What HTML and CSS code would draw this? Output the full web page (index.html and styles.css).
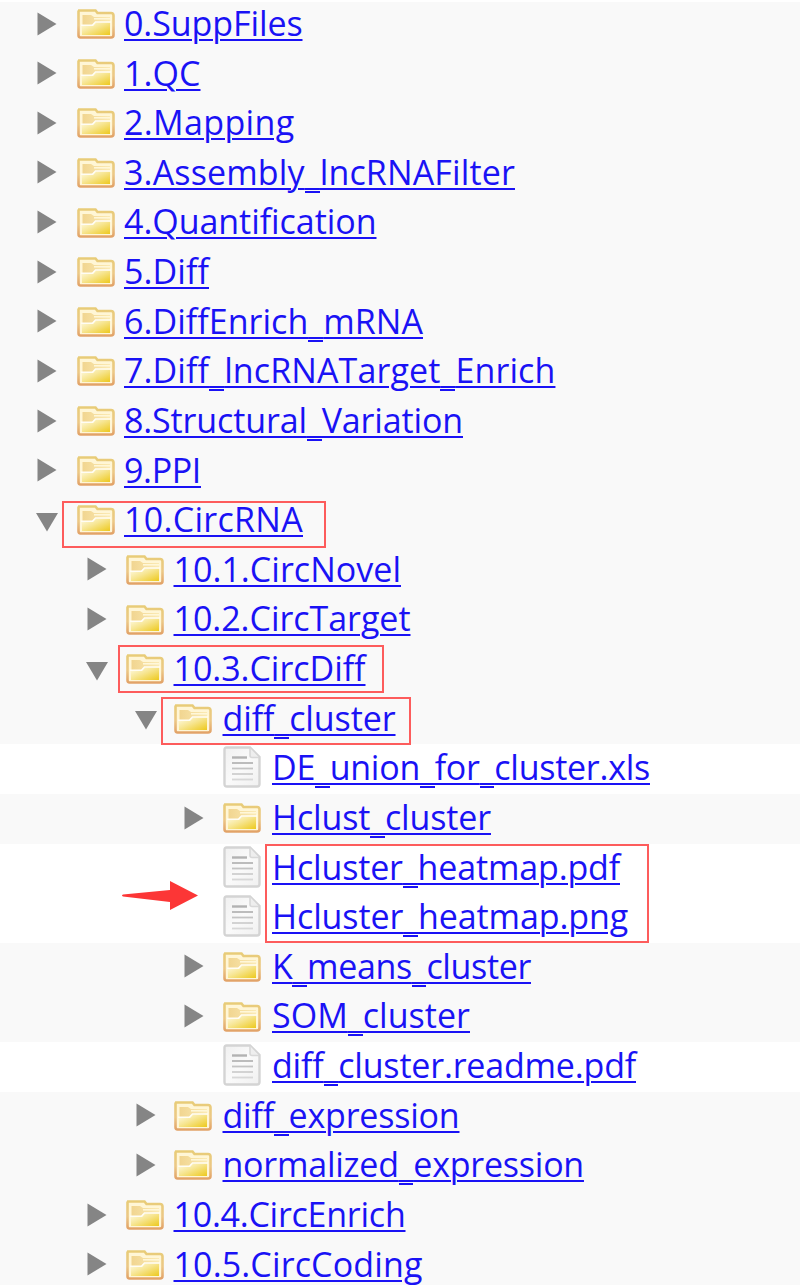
FILE: index.html
```html
<!DOCTYPE html>
<html lang="en">
<head>
<meta charset="utf-8">
<title>Results</title>
<link rel="stylesheet" href="styles.css">
</head>
<body>
<svg class="defs" width="0" height="0" aria-hidden="true">
  <defs>
    <linearGradient id="gEdge" x1="0" y1="0" x2="0" y2="1"><stop offset="0" stop-color="#e8cc78"/><stop offset=".55" stop-color="#ecc886"/><stop offset="1" stop-color="#e2a368"/></linearGradient>
    <linearGradient id="gFront" x1="0" y1="0" x2="1" y2="1"><stop offset="0" stop-color="#fffbe6"/><stop offset=".45" stop-color="#f7e694"/><stop offset="1" stop-color="#edc91c"/></linearGradient>
    <linearGradient id="gBack" x1="0" y1="0" x2="1" y2="0"><stop offset="0" stop-color="#f1d590"/><stop offset="1" stop-color="#fbeab4"/></linearGradient>
    <symbol id="folder" viewBox="0 0 38 30">
      <path d="M2 1.500h16.500l2 2.500H34q2.500 0 2.500 2.500V26q0 2.500-2.500 2.500H3.500Q1.500 28.500 1.500 26V2.500z" fill="#fff6d6" stroke="url(#gEdge)" stroke-width="2.600"/>
      <path d="M5.500 6H14l3 2h16v6H17l-2 2H5.500z" fill="url(#gBack)"/>
      <path d="M17 9.800h16" stroke="#fff8dc" stroke-width="1.500"/>
      <path d="M5 17h11l3-3.500h14V26H5z" fill="url(#gFront)"/>
      <path d="M4 16.200h11.500l3-3.200H34" fill="none" stroke="#fffdf4" stroke-width="1.600"/>
    </symbol>
    <linearGradient id="gDoc" x1="0" y1="0" x2="1" y2="1"><stop offset="0" stop-color="#f0f0f0"/><stop offset=".5" stop-color="#fafafa"/><stop offset="1" stop-color="#f0f0f0"/></linearGradient>
    <symbol id="doc" viewBox="0 0 38 42">
      <path d="M3.500 1.500H27l9.500 9.500v27q0 2.500-2.500 2.500H4Q1.500 40.500 1.500 38V3.500q0-2 2-2z" fill="url(#gDoc)" stroke="#d4d4d4" stroke-width="2.400"/>
      <path d="M27 2v7.500q0 2 2 2h7" fill="#eee" stroke="#d8d8d8" stroke-width="1.600"/>
      <path d="M9 11.500h15" stroke="#b2b2b2" stroke-width="2.400"/>
      <path d="M9 17h21" stroke="#bcbcbc" stroke-width="2"/>
      <path d="M9 22.500h21" stroke="#c4c4c4" stroke-width="1.800"/>
      <path d="M9 28h21" stroke="#cecece" stroke-width="1.800"/>
      <path d="M9 33.500h21" stroke="#d8d8d8" stroke-width="1.800"/>
    </symbol>
    <symbol id="closed" viewBox="0 0 22 24"><path d="M1.500 .5L20.500 12 1.500 23.500z" fill="#858585"/></symbol>
    <symbol id="open" viewBox="0 0 22 24"><path d="M0 5h22L11 23.500z" fill="#858585"/></symbol>
  </defs>
</svg>
<main class="page">
  <ul class="tree" id="tree"></ul>
  <div class="mark mark-circrna"></div>
  <div class="mark mark-circdiff"></div>
  <div class="mark mark-cluster"></div>
  <div class="mark mark-heatmap"></div>
  <svg class="pointer" viewBox="0 0 78 32"><path d="M2 14.500L49 10V1L77 15.500 49 30V22L2 16.500Q0 15.500 2 14.500z" fill="#fc3636"/></svg>
</main>
<script src="tree.js"></script>
</body>
</html>
```
FILE: styles.css
```css
body {
  margin: 0;
  background: #fff;
  font-family: "Open Sans", "Noto Sans", sans-serif;
}
.defs { position: absolute; }
.page {
  position: relative;
  width: 800px;
  height: 1285px;
  overflow: hidden;
}
.tree {
  list-style: none;
  margin: 0;
  padding: 0;
}
.row {
  box-sizing: border-box;
  display: flex;
  align-items: flex-start;
  height: 49.63px;
  padding-left: 36px;
  background: #f9f9f9;
}
.row:first-child { box-shadow: inset 0 2px #fff; }
.level-1 { padding-left: 85.5px; }
.level-2 { padding-left: 135px; }
.level-3 { padding-left: 183px; }
.file { background: #fff; }
.toggle {
  flex: none;
  width: 22px;
  height: 24px;
  margin: 11.500px 18.500px 0 0;
}
.icon {
  flex: none;
  width: 38px;
  height: 30px;
  margin: 9px 9.500px 0 0;
}
.level-2 .icon { margin-left: -1.500px; }
.level-2 .icon { margin-right: 10.500px; }
.level-3 .icon { margin-left: -0.500px; margin-right: 11px; }
.file .icon { height: 42px; margin-top: 2px; }
.name {
  margin-top: 0.9px;
  color: #1a12f5;
  font-size: 34px;
  line-height: 45px;
  white-space: nowrap;
  font-variant-ligatures: none;
  text-decoration: underline;
  text-decoration-thickness: 2px;
  text-underline-offset: 3px;
}
/* second stroke under each underscore, below the link underline */
.low {
  background: linear-gradient(#1a12f5, #1a12f5) 0 calc(100% - 2px) / 15px 2px no-repeat;
}
.mark {
  position: absolute;
  box-sizing: border-box;
  border: 2px solid #fd5c5c;
}
.mark-circrna { left: 62px; top: 501px; width: 264px; height: 47px; }
.mark-circdiff { left: 118px; top: 645px; width: 266px; height: 48px; }
.mark-cluster { left: 161px; top: 697px; width: 250px; height: 48px; }
.mark-heatmap { left: 265px; top: 844px; width: 384px; height: 99px; }
.pointer {
  position: absolute;
  left: 121px;
  top: 880px;
  width: 78px;
  height: 32px;
}
```
FILE: tree.js
```javascript
// [level, state, name, label width]
const entries = [
  [0, "closed", "0.SuppFiles", 178.5],
  [0, "closed", "1.QC", 76.5],
  [0, "closed", "2.Mapping", 170.5],
  [0, "closed", "3.Assembly_lncRNAFilter", 391],
  [0, "closed", "4.Quantification", 252.5],
  [0, "closed", "5.Diff", 85],
  [0, "closed", "6.DiffEnrich_mRNA", 299],
  [0, "closed", "7.Diff_lncRNATarget_Enrich", 431.5],
  [0, "closed", "8.Structural_Variation", 339],
  [0, "closed", "9.PPI", 77],
  [0, "open", "10.CircRNA", 179],
  [1, "closed", "10.1.CircNovel", 227.5],
  [1, "closed", "10.2.CircTarget", 237],
  [1, "open", "10.3.CircDiff", 192],
  [2, "open", "diff_cluster", 173],
  [3, "file", "DE_union_for_cluster.xls", 378],
  [3, "closed", "Hclust_cluster", 219],
  [3, "file", "Hcluster_heatmap.pdf", 348],
  [3, "file", "Hcluster_heatmap.png", 356],
  [3, "closed", "K_means_cluster", 259],
  [3, "closed", "SOM_cluster", 198],
  [3, "file", "diff_cluster.readme.pdf", 364],
  [2, "closed", "diff_expression", 237],
  [2, "closed", "normalized_expression", 361.5],
  [1, "closed", "10.4.CircEnrich", 232],
  [1, "closed", "10.5.CircCoding", 249]
];

const tree = document.getElementById("tree");
for (const [level, state, name, width] of entries) {
  const isFile = state === "file";
  const row = document.createElement("li");
  row.className = `row level-${level}${isFile ? " file" : ""}`;
  row.innerHTML =
    `<svg class="toggle">${isFile ? "" : `<use href="#${state}"/>`}</svg>` +
    `<svg class="icon"><use href="#${isFile ? "doc" : "folder"}"/></svg>` +
    `<a class="name" href="#">${name.replaceAll("_", '<span class="low">_</span>')}</a>`;
  tree.append(row);
  const label = row.querySelector(".name");
  const natural = label.getBoundingClientRect().width;
  label.style.letterSpacing = `${(width - natural) / name.length}px`;
}
```
